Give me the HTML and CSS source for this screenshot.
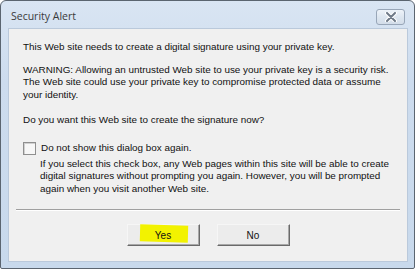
FILE: index.html
```html
<!DOCTYPE html>
<html lang="en">
<head>
    <meta charset="UTF-8">
    <meta name="viewport" content="width=device-width, initial-scale=1.0">
    <title>Security Alert</title>
    <link rel="stylesheet" href="styles.css">
</head>
<body>

<div class="window">
    <div class="titlebar">
        <span class="title">Security Alert</span>
        <button class="close" aria-label="Close">
            <svg width="12" height="10" viewBox="0 0 12 10">
                <path d="M2 1 L10 9 M10 1 L2 9" stroke="#ffffff" stroke-width="4" stroke-linecap="round"/>
                <path d="M2 1 L10 9 M10 1 L2 9" stroke="#6f7a88" stroke-width="2" stroke-linecap="round"/>
            </svg>
        </button>
    </div>

    <div class="content">
        <p>This Web site needs to create a digital signature using your private key.</p>
        <p class="warning">WARNING: Allowing an untrusted Web site to use your private key is a security risk.<br>
            The Web site could use your private key to compromise protected data or assume<br>
            your identity.</p>
        <p>Do you want this Web site to create the signature now?</p>

        <label class="check">
            <span class="box"></span>
            <span>Do not show this dialog box again.</span>
        </label>
        <p class="note">If you select this check box, any Web pages within this site will be able to create<br>
            digital signatures without prompting you again. However, you will be prompted<br>
            again when you visit another Web site.</p>

        <div class="separator"></div>

        <div class="buttons">
            <button class="button yes"><span class="highlight"></span><span class="label">Yes</span></button>
            <button class="button">No</button>
        </div>
    </div>
</div>

</body>
</html>
```

FILE: styles.css
```css
body {
    margin: 0;
    font-family: "Liberation Sans", Arial, sans-serif;
    background: #ffffff;
}
.window {
    width: 413px;
    height: 267px;
    border: 1px solid #5b6570;
    border-radius: 6px 6px 2px 2px;
    background: linear-gradient(to bottom, #d9e5f3 0%, #cddcee 30%, #c8d9ec 100%);
    display: flex;
    flex-direction: column;
}
.titlebar {
    height: 27px;
    display: flex;
    align-items: center;
    padding: 0 9px 0 10px;
}
.title {
    flex: 1;
    font-family: "Open Sans", "Liberation Sans", sans-serif;
    font-size: 10.5px;
    color: #3a3a3a;
    padding-top: 2px;
}
.close {
    width: 29px;
    height: 16px;
    margin-top: 4px;
    padding: 0;
    border: 1px solid #98a6b8;
    border-radius: 3px;
    background: linear-gradient(to bottom, #eef3f9 0%, #dde6f0 50%, #d3dde9 100%);
    display: flex;
    align-items: center;
    justify-content: center;
}
.content {
    flex: 1;
    margin: 0 6px 6px 7px;
    background: #f0f0f0;
    border: 1px solid #bac9db;
    padding: 12px 14px 0 14px;
    font-size: 9.9px;
    line-height: 12.5px;
    color: #111111;
    white-space: nowrap;
}
.content p {
    margin: 0 0 10px 0;
}
.content .warning {
    margin-bottom: 13px;
}
.check {
    display: flex;
    align-items: center;
    gap: 5px;
    margin-top: 15px;
    margin-bottom: 3px;
}
.box {
    width: 11px;
    height: 11px;
    border: 1px solid #8f8f8f;
    background: #f7f7f7;
    box-shadow: inset 1px 1px 0 #d0d0d0;
}
.note {
    padding-left: 17px;
}
.content .note {
    margin-bottom: 0;
}
.separator {
    margin: 14px -7px 0 -7px;
    border-top: 1px solid #a0a0a0;
    border-bottom: 1px solid #ffffff;
}
.buttons {
    display: flex;
    justify-content: center;
    gap: 17px;
    margin-top: 13px;
}
.button {
    position: relative;
    width: 73px;
    height: 22px;
    padding: 0;
    font-family: "Liberation Sans", Arial, sans-serif;
    font-size: 10px;
    color: #111111;
    background: #ececec;
    border: 1px solid;
    border-color: #f6f6f6 #6a6a6a #6a6a6a #f6f6f6;
    box-shadow: inset -1px -1px 0 #a8a8a8;
}
.highlight {
    position: absolute;
    left: 12px;
    top: 0;
    width: 48px;
    height: 17px;
    background: #f2f200;
    transform: rotate(1.5deg);
}
.label {
    position: relative;
}
```
